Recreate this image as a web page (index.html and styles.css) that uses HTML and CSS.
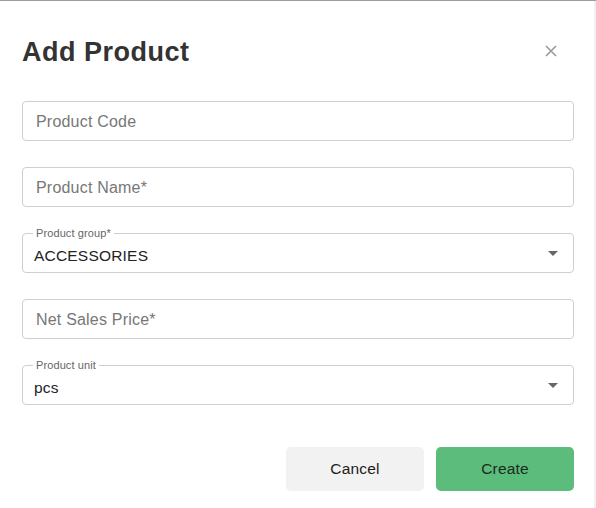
FILE: index.html
```html
<!DOCTYPE html>
<html>
<head>
<meta charset="utf-8">
<link rel="stylesheet" href="styles.css">
</head>
<body>
<div class="dialog">
  <div class="header">
    <h1 class="title">Add Product</h1>
    <button class="close" aria-label="Close">
      <svg width="12" height="12" viewBox="0 0 12 12"><path d="M1 1L11 11M11 1L1 11" stroke="#9a9a9a" stroke-width="1.6" fill="none"/></svg>
    </button>
  </div>
  <form class="form">
    <div class="field"><span class="placeholder">Product Code</span></div>
    <div class="field"><span class="placeholder">Product Name*</span></div>
    <div class="field select">
      <span class="legend">Product group*</span>
      <span class="value">ACCESSORIES</span>
      <span class="arrow"></span>
    </div>
    <div class="field"><span class="placeholder">Net Sales Price*</span></div>
    <div class="field select">
      <span class="legend">Product unit</span>
      <span class="value">pcs</span>
      <span class="arrow"></span>
    </div>
  </form>
  <div class="actions">
    <button class="btn cancel">Cancel</button>
    <button class="btn create">Create</button>
  </div>
</div>
</body>
</html>
```
FILE: styles.css
```css
* { box-sizing: border-box; }
html, body { margin: 0; padding: 0; background: #fff; }
body {
  font-family: "Liberation Sans", Arial, sans-serif;
  color: #222;
  border-top: 1px solid #9c9aa3;
  height: 508px;
  overflow: hidden;
}
.dialog {
  padding: 0 20px 0 22px;
  border-right: 2px solid #f1f1f1;
  height: 100%;
}
.header {
  display: flex;
  justify-content: space-between;
  align-items: center;
  height: 100px;
  padding-top: 3px;
}
.title {
  margin: 0;
  font-size: 27px;
  font-weight: 700;
  color: #333;
  letter-spacing: 0.5px;
}
.close {
  border: 0;
  background: none;
  padding: 0;
  margin-right: 17px;
  margin-top: -3px;
  width: 12px;
  height: 12px;
  display: flex;
}
.form {
  display: flex;
  flex-direction: column;
  gap: 26px;
}
.field {
  height: 40px;
  border: 1px solid #cfcfcf;
  border-radius: 4px;
  display: flex;
  align-items: center;
  padding: 2px 13px 0;
  font-size: 16px;
  letter-spacing: 0.2px;
}
.placeholder { color: #777; }
.select {
  position: relative;
  padding: 6px 15px 0 11px;
  justify-content: space-between;
}
.legend {
  position: absolute;
  top: -7px;
  left: 10px;
  padding: 0 3px;
  background: #fff;
  font-size: 11px;
  line-height: 12px;
  letter-spacing: 0.1px;
  color: #666;
}
.value {
  color: #222;
  font-size: 15.5px;
}
.arrow {
  width: 0;
  height: 0;
  border-left: 5px solid transparent;
  border-right: 5px solid transparent;
  border-top: 5px solid #666;
  margin-top: -6px;
}
.actions {
  display: flex;
  justify-content: flex-end;
  gap: 12px;
  margin-top: 42px;
}
.btn {
  height: 44px;
  border: 0;
  border-radius: 5px;
  font-family: "Liberation Sans", Arial, sans-serif;
  font-size: 15.5px;
  letter-spacing: 0.2px;
  color: #1d1d1d;
  padding-top: 1px;
}
.cancel { width: 138px; background: #f2f2f2; }
.create { width: 138px; background: #5bbc7c; color: #1c2a20; }
```
